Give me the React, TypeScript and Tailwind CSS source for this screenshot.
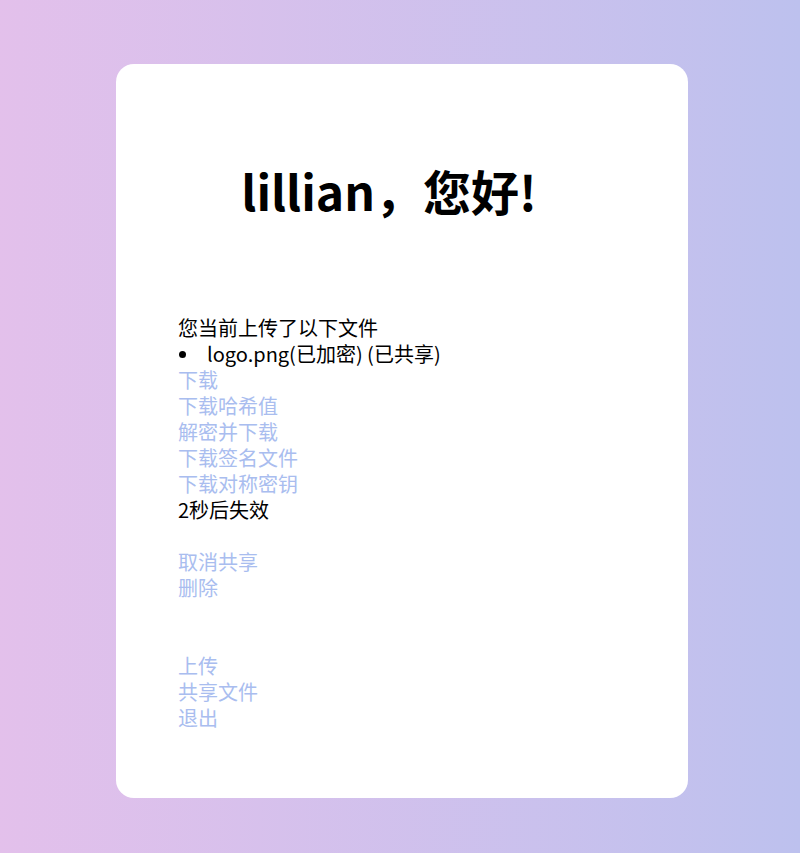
import React from "react";

const Link = ({ children }: { children: React.ReactNode }) => (
  <a className="block text-[#a9bdef] cursor-pointer">{children}</a>
);

export default function App() {
  return (
    <div
      className="min-h-[853px] w-full bg-gradient-to-r from-[#e3c0eb] to-[#bdc1ee] pt-[64px] pb-[55px] flex justify-center pl-[4px]"
      style={{ fontFamily: '"Noto Sans CJK SC", "Noto Sans", sans-serif' }}
    >
      <div className="w-[572px] h-[734px] bg-white rounded-[18px] pt-[102px] px-[62px]">
        <h1 className="text-[48px] leading-[48px] font-bold text-black text-center pr-[26px]">
          lillian，您好!
        </h1>
        <div className="mt-[101px] text-[20px] leading-[26px] text-black">
          <div>您当前上传了以下文件</div>
          <div className="flex items-center">
            <span className="w-[29px] flex items-center">
              <span className="ml-[1px] w-[7px] h-[7px] rounded-full bg-black" />
            </span>
            <span>logo.png(已加密) (已共享)</span>
          </div>
          <Link>下载</Link>
          <Link>下载哈希值</Link>
          <Link>解密并下载</Link>
          <Link>下载签名文件</Link>
          <Link>下载对称密钥</Link>
          <div>2秒后失效</div>
          <div className="h-[26px]" />
          <Link>取消共享</Link>
          <Link>删除</Link>
          <div className="h-[52px]" />
          <Link>上传</Link>
          <Link>共享文件</Link>
          <Link>退出</Link>
        </div>
      </div>
    </div>
  );
}
